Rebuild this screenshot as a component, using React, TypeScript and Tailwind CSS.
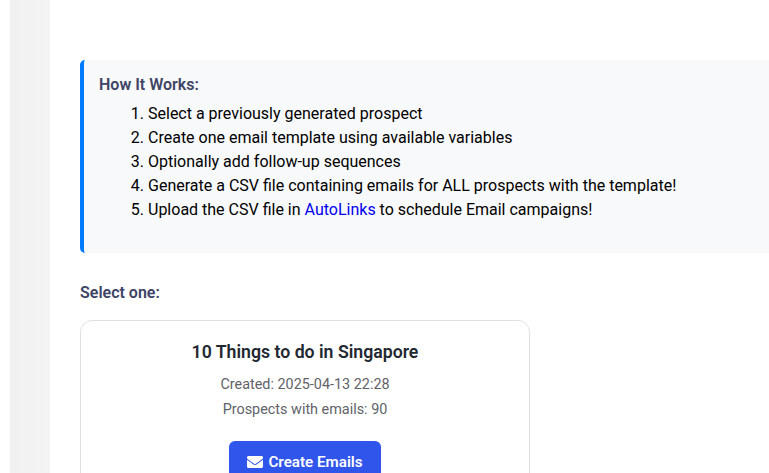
import { FaEnvelope } from "react-icons/fa";

const steps = [
  <>Select a previously generated prospect</>,
  <>Create one email template using available variables</>,
  <>Optionally add follow-up sequences</>,
  <>Generate a CSV file containing emails for ALL prospects with the template!</>,
  <>Upload the CSV file in <a href="#" className="text-[#0000ee]">AutoLinks</a> to schedule Email campaigns!</>,
];

export default function App() {
  return (
    <div className="flex h-[473px] w-[769px] overflow-hidden bg-white font-['Roboto',sans-serif] text-[16px]">
      <div className="ml-[10px] w-[40px] shrink-0 bg-gradient-to-r from-[#f1f1f2] to-[#f3f3f3]" />
      <main className="min-w-0 flex-1 pl-[30px] pt-[60px]">
        <section className="h-[193px] w-[800px] rounded-[5px] border-l-4 border-[#007bff] bg-[#f8f9fa] pl-[15px] pt-[15px]">
          <h3 className="text-[16px] leading-[19px] font-semibold text-[#3d4465]">How It Works:</h3>
          <ol className="mt-[8px] list-decimal pl-[49px] leading-[24px] text-black">
            {steps.map((s, i) => (
              <li key={i}>{s}</li>
            ))}
          </ol>
        </section>
        <h4 className="mt-[30px] text-[16px] leading-[19px] font-semibold text-[#3d4465]">Select one:</h4>
        <div className="mt-[18px] flex w-[450px] flex-col items-center rounded-[12px] border border-[#e0e0e0] bg-white pt-[20px] pb-[20px]">
          <h3 className="text-[17.7px] leading-[22px] font-semibold text-[#222831]">10 Things to do in Singapore</h3>
          <p className="mt-[9px] text-[14.4px] leading-[25px] text-[#5f6368]">Created: 2025-04-13 22:28</p>
          <p className="text-[14.4px] leading-[25px] text-[#5f6368]">Prospects with emails: 90</p>
          <button className="mt-[19px] flex h-[44px] w-[152px] items-center justify-center gap-[5px] rounded-[6px] bg-[#2f55eb] pb-[2px] text-[15.2px] font-semibold text-white">
            <FaEnvelope size={16} />
            Create Emails
          </button>
        </div>
      </main>
    </div>
  );
}
